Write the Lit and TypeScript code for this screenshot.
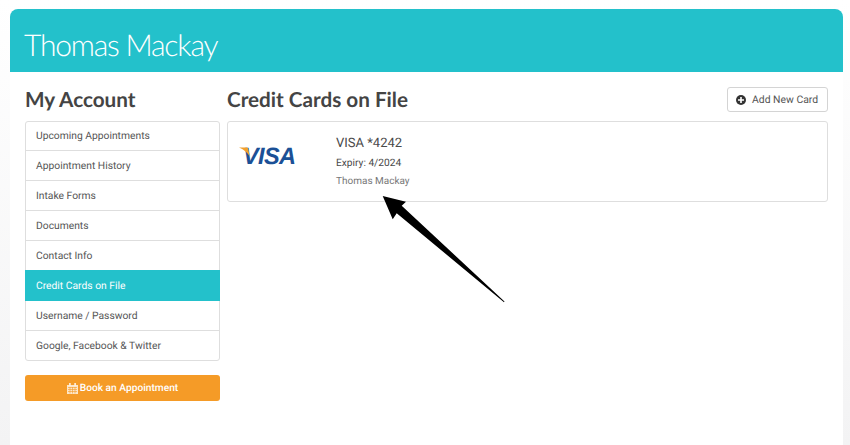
import { LitElement, html, css } from "lit";
import { customElement } from "lit/decorators.js";

const NAV_ITEMS = [
  "Upcoming Appointments",
  "Appointment History",
  "Intake Forms",
  "Documents",
  "Contact Info",
  "Credit Cards on File",
  "Username / Password",
  "Google, Facebook & Twitter",
];

@customElement("app-root")
export class AppRoot extends LitElement {
  static styles = css`
    :host {
      display: block;
      position: relative;
      height: 445px;
      overflow: hidden;
      background: linear-gradient(#ffffff, #f3f3f4);
      font-family: Roboto, "Open Sans", sans-serif;
      color: #4a4a4a;
      text-rendering: geometricPrecision;
    }
    .panel {
      margin: 9px 7px 0 10px;
      height: 436px;
      background: #fff;
      border-radius: 8px 8px 0 0;
    }
    .banner {
      height: 63px;
      box-sizing: border-box;
      padding: 15px 0 0 14px;
      background: #23c1cb;
      border-radius: 8px 8px 0 0;
      color: #fff;
      font-family: Lato, sans-serif;
      font-size: 30px;
      font-weight: 300;
      line-height: 42px;
      letter-spacing: -1.2px;
    }
    .content {
      display: flex;
      gap: 7px;
      padding: 15px 15px 0 15px;
    }
    .sidebar {
      flex: 0 0 195px;
    }
    .main {
      flex: 1;
    }
    h2 {
      margin: 0;
      height: 34px;
      font-family: Lato, sans-serif;
      font-size: 20.7px;
      font-weight: 700;
      line-height: 27px;
      color: #444;
    }
    .nav-item {
      height: 31px;
      margin-top: -1px;
      box-sizing: border-box;
      padding-left: 10px;
      border: 1px solid #dedede;
      font-size: 10.3px;
      line-height: 29px;
      color: #555;
    }
    .nav-item:first-child {
      height: 30px;
      margin-top: 0;
      border-radius: 3px 3px 0 0;
      line-height: 27px;
    }
    .nav-item:last-child {
      border-radius: 0 0 3px 3px;
    }
    .nav-item.active {
      position: relative;
      z-index: 1;
      background: #23c1cb;
      border-color: #23c1cb;
      color: #fff;
    }
    .book {
      display: flex;
      align-items: center;
      justify-content: center;
      gap: 2px;
      height: 26px;
      margin-top: 14px;
      background: #f59b27;
      border-radius: 3px;
      color: #fff;
      font-size: 10.2px;
      font-weight: 500;
    }
    .head-row {
      display: flex;
      justify-content: space-between;
      align-items: flex-start;
    }
    .add {
      display: flex;
      align-items: center;
      gap: 6px;
      height: 25px;
      width: 101px;
      box-sizing: border-box;
      padding-left: 8px;
      border: 1px solid #d4d4d4;
      border-radius: 3px;
      background: #fff;
      font-size: 10.4px;
      color: #555;
      white-space: nowrap;
    }
    .card {
      display: flex;
      height: 81px;
      box-sizing: border-box;
      border: 1px solid #dedede;
      border-radius: 3px;
    }
    .logo {
      position: relative;
      flex: 0 0 108px;
      padding: 19px 0 0 15px;
      box-sizing: border-box;
      color: #1b5096;
      font-family: "Liberation Sans", sans-serif;
      font-size: 23.5px;
      font-style: italic;
      font-weight: 700;
      line-height: 30px;
      letter-spacing: -0.6px;
    }
    .swoosh {
      position: absolute;
      left: 11px;
      top: 25px;
      width: 11px;
      height: 10px;
    }
    .details {
      padding-top: 13px;
    }
    .number {
      font-size: 13px;
      line-height: 18px;
      color: #4a4a4a;
    }
    .expiry {
      margin-top: 3px;
      font-size: 10.2px;
      line-height: 16px;
      color: #4a4a4a;
    }
    .owner {
      margin-top: 2px;
      font-size: 10px;
      line-height: 16px;
      color: #777;
    }
    .arrow {
      position: absolute;
      z-index: 2;
      left: 380px;
      top: 193px;
      width: 130px;
      height: 112px;
    }
  `;

  render() {
    return html`
      <div class="panel">
        <div class="banner">Thomas Mackay</div>
        <div class="content">
          <div class="sidebar">
            <h2>My Account</h2>
            <div class="nav">
              ${NAV_ITEMS.map(
                (item) =>
                  html`<div class="nav-item ${item === "Credit Cards on File" ? "active" : ""}">${item}</div>`
              )}
            </div>
            <div class="book">
              <svg width="11" height="11" viewBox="0 0 11 11">
                <path fill="#fff" fill-opacity="0.75" d="M0 2h11v9H0z" />
                <path fill="none" stroke="#f59b27" stroke-width="0.6" d="M1 4.5h9M1 6.5h9M1 8.5h9M3 4v6.5M5.5 4v6.5M8 4v6.5" />
                <path fill="#fff" d="M2.2 0h1.4v2.6H2.2zM7.4 0h1.4v2.6H7.4z" />
              </svg>
              Book an Appointment
            </div>
          </div>
          <div class="main">
            <div class="head-row">
              <h2>Credit Cards on File</h2>
              <div class="add">
                <svg width="10" height="10" viewBox="0 0 10 10">
                  <circle cx="5" cy="5" r="5" fill="#333" />
                  <path fill="#fff" d="M4.2 2h1.6v2.2H8v1.6H5.8V8H4.2V5.8H2V4.2h2.2z" />
                </svg>
                Add New Card
              </div>
            </div>
            <div class="card">
              <div class="logo">
                VISA
                <svg class="swoosh" viewBox="0 0 11 10">
                  <path fill="#f2a02c" d="M0 0.5H7.5C8.5 0.5 9 1 9.2 2L10.8 9.8C9 6 5 2.5 0 0.5z" />
                </svg>
              </div>
              <div class="details">
                <div class="number">VISA *4242</div>
                <div class="expiry">Expiry: 4/2024</div>
                <div class="owner">Thomas Mackay</div>
              </div>
            </div>
          </div>
        </div>
      </div>
      <svg class="arrow" viewBox="0 0 130 112">
        <path fill="#000" d="M2.7 3L26 8.7L21.7 12.7L124.5 108.5L124 109.2L16.7 20.3L12.7 26.3z" />
      </svg>
    `;
  }
}
